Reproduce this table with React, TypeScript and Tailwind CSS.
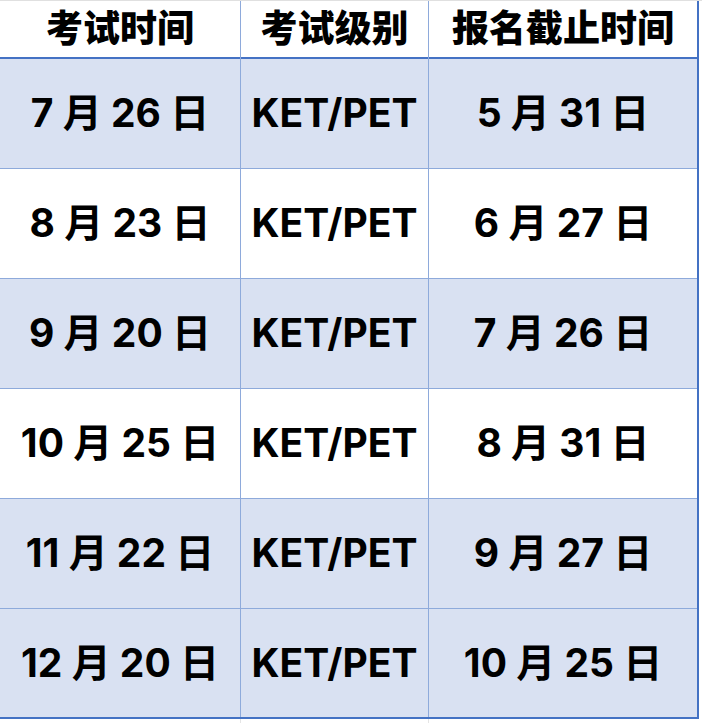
const rows = [
  { exam: "7 月 26 日", level: "KET/PET", deadline: "5 月 31 日", shaded: true },
  { exam: "8 月 23 日", level: "KET/PET", deadline: "6 月 27 日", shaded: false },
  { exam: "9 月 20 日", level: "KET/PET", deadline: "7 月 26 日", shaded: true },
  { exam: "10 月 25 日", level: "KET/PET", deadline: "8 月 31 日", shaded: false },
  { exam: "11 月 22 日", level: "KET/PET", deadline: "9 月 27 日", shaded: true },
  { exam: "12 月 20 日", level: "KET/PET", deadline: "10 月 25 日", shaded: true },
]

const font = "font-['Inter','Noto_Sans_CJK_SC',sans-serif]"

export default function App() {
  return (
    <div className={`w-[702px] h-[723px] bg-white ${font} text-black`}>
      <div className="border-t border-[#e0e0e0]">
        <div className="w-[699px] border-r-2 border-[#4472c4]">
          {/* header */}
          <div className="grid grid-cols-[241px_188px_268px] h-[58px] border-b-2 border-[#4472c4]">
            <div className="flex items-center justify-center border-r border-[#8eaadb] text-[37px] font-black pb-[3px]">
              考试时间
            </div>
            <div className="flex items-center justify-center border-r border-[#8eaadb] text-[37px] font-black pb-[3px]">
              考试级别
            </div>
            <div className="flex items-center justify-center text-[37px] font-black pb-[3px]">
              报名截止时间
            </div>
          </div>
          {rows.map((r, i) => (
            <div
              key={i}
              className={
                "grid grid-cols-[241px_188px_268px] h-[110px] " +
                (i === rows.length - 1
                  ? "h-[109px] border-b-2 border-[#4472c4] "
                  : "border-b border-[#8eaadb] ") +
                (r.shaded ? "bg-[#d9e1f2]" : "bg-white")
              }
            >
              <div className="flex items-center justify-center border-r border-[#8eaadb] text-[39px] font-bold whitespace-pre">
                {r.exam}
              </div>
              <div className="flex items-center justify-center border-r border-[#8eaadb] text-[39px] font-bold">
                {r.level}
              </div>
              <div className="flex items-center justify-center text-[39px] font-bold whitespace-pre">
                {r.deadline}
              </div>
            </div>
          ))}
        </div>
        <div className="grid grid-cols-[241px_188px_268px] h-[4px]">
          <div className="border-r border-[#e5e5e5]" />
          <div className="border-r border-[#e5e5e5]" />
          <div />
        </div>
      </div>
    </div>
  )
}
